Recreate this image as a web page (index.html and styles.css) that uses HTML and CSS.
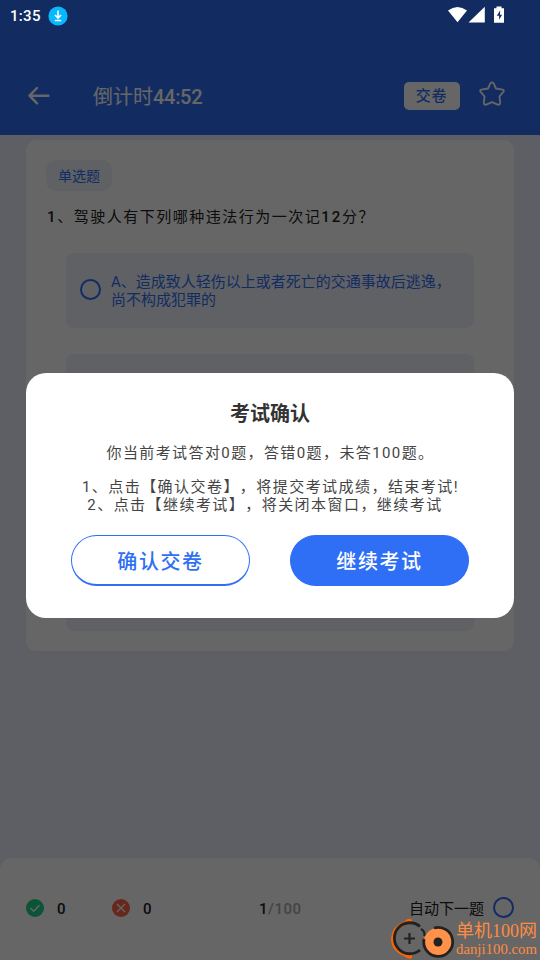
FILE: index.html
```html
<!DOCTYPE html>
<html lang="zh-CN">
<head>
<meta charset="utf-8">
<title>考试</title>
<link rel="stylesheet" href="styles.css">
</head>
<body>
<div class="screen">
  <header class="topbar">
    <svg class="back" width="24" height="20" viewBox="0 0 24 20" fill="none" stroke="#fff" stroke-width="2.400" stroke-linecap="round" stroke-linejoin="round"><path d="M10 2 2.500 9.700l7.500 7.700M2.500 9.700h19"/></svg>
    <h1 class="timer">倒计时<b>44:52</b></h1>
    <span class="submit">交卷</span>
    <svg class="star" width="26" height="26" viewBox="0 0 26 26" fill="none" stroke="#fff" stroke-width="1.8" stroke-linejoin="round"><path d="M11.500 2.200Q13 .4 14.500 2.200L17 7.500 23.500 8.600Q25.700 9.300 24.400 10.900L20.500 15.400 21.200 22Q20.800 24.200 18.800 23.600L13 21.200 7.200 23.600Q5.200 24.200 4.800 22L5.500 15.400 1.600 10.900Q.3 9.300 2.500 8.600L9 7.500Z"/></svg>
  </header>
  <main class="card">
    <span class="tag">单选题</span>
    <p class="question"><b>1</b>、驾驶人有下列哪种违法行为一次记<b>12</b>分？</p>
    <div class="option"><i class="radio"></i><span>A、造成致人轻伤以上或者死亡的交通事故后逃逸，尚不构成犯罪的</span></div>
    <div class="option"></div>
    <div class="option"></div>
    <div class="option last"></div>
  </main>
  <footer class="bottombar">
    <svg width="18" height="18" viewBox="0 0 18 18"><circle cx="9" cy="9" r="9" fill="#20d08a"/><path d="m4.500 9 3.200 3.200 5.800-6" fill="none" stroke="#fff" stroke-width="1.400"/></svg>
    <span class="count right">0</span>
    <svg width="18" height="18" viewBox="0 0 18 18"><circle cx="9" cy="9" r="9" fill="#ff6545"/><path d="m5 5 8 8m0-8-8 8" fill="none" stroke="#fff" stroke-width="1.300"/></svg>
    <span class="count wrong">0</span>
    <span class="progress">1<em>/100</em></span>
    <span class="auto">自动下一题</span>
    <i class="radio"></i>
  </footer>
</div>
<div class="overlay">
  <section class="dialog">
    <h2>考试确认</h2>
    <p class="summary">你当前考试答对0题，答错0题，未答100题。</p>
    <p class="line first">1、点击【确认交卷】，将提交考试成绩，结束考试!</p>
    <p class="line second">2、点击【继续考试】，将关闭本窗口，继续考试</p>
    <div class="actions">
      <button class="btn">确认交卷</button>
      <button class="btn primary">继续考试</button>
    </div>
  </section>
</div>
<div class="status">
  <span class="clock">1:35</span>
  <svg width="20" height="20" viewBox="0 0 20 20"><circle cx="10" cy="10" r="9.600" fill="#06b9ff"/><path d="M10 4.500v7M7 9l3 3 3-3M6.800 14.500h6.400" fill="none" stroke="#fff" stroke-width="1.600"/></svg>
  <svg class="signals" width="60" height="18" viewBox="0 0 60 18" fill="#fff"><path d="M0 3.500Q9.500-3.500 19 3.500L9.500 15.300ZM36.800-.2v15.700H20.500ZM46 1.200h2.500V-.5h5v1.700H56v14.600H46Z"/><path d="m52.300 3.300-3.500 5.500h2.300v4l3-5h-2.200Z" fill="#132c62"/></svg>
</div>
<div class="watermark">
  <svg width="66" height="44" viewBox="0 0 66 44" fill="none"><path d="M15 4Q19 0 22 3L22 6Q5 10 5 22 6 34 22 38L22 41Q19 43 14 39 1 34 1 21 2 9 15 4Z" fill="#f60"/><path d="M30 9.500A15.500 15.500 0 1 0 30 33" stroke="#222" stroke-width="2.800"/><path d="M19.500 16v11M14 21.500h11M31 12q4 2 3.500 7" stroke="#222" stroke-width="2.200"/><circle cx="48" cy="25" r="14" fill="#ff9148"/><path d="M44 11A14.500 14.500 0 1 1 34 22" stroke="#222" stroke-width="2.800"/><circle cx="48" cy="25" r="4.500" fill="#222"/></svg>
  <div class="brand"><b>单机100网</b><span>danji100.com</span></div>
</div>
</body>
</html>
```
FILE: styles.css
```css
* { box-sizing: border-box; }
body { margin: 0; width: 540px; height: 960px; overflow: hidden; position: relative; font-family: Roboto, "Noto Sans CJK SC", sans-serif; text-spacing-trim: space-all; }
h1, h2, p { margin: 0; font-weight: 400; }
.screen { height: 960px; display: flex; flex-direction: column; background: #e9edf9; }
.topbar { height: 135px; flex: none; display: flex; align-items: center; padding: 57px 35px 0 27px; background: #2f6ff5; margin-bottom: 5px; }
.timer { margin-left: 42px; padding-top: 2px; color: #fff; font-size: 20px; line-height: 30px; white-space: nowrap; }
.timer b { font-weight: 500; letter-spacing: -.3px; }
.submit { margin-left: auto; width: 56px; height: 28px; padding-right: 1px; border-radius: 5px; background: #fff; color: #2f6ff5; font-size: 15px; font-weight: 500; line-height: 29px; text-align: center; letter-spacing: .8px; }
.star { margin: -4px 0 0 19px; }
.card { height: 511px; margin: 0 26px; padding: 20px 40px 0; background: #fff; border-radius: 10px; }
.tag { display: block; width: 66px; height: 31px; margin-left: -20px; border-radius: 10px; background: #f0f2fb; color: #2f6ff5; font-size: 14px; line-height: 33px; text-align: center; }
.question { margin: 15px 0 24px -19px; height: 23px; line-height: 23px; font-size: 15px; letter-spacing: 1.500px; color: #222; white-space: nowrap; }
.question b { font-weight: 500; letter-spacing: 1.800px; }
.option { display: flex; align-items: center; height: 75px; margin-bottom: 26px; padding: 0 20px 0 14px; border-radius: 8px; background: #f0f2fb; color: #2f6ff5; font-size: 15px; line-height: 18px; }
.option span { margin-left: 10px; }
.radio { flex: none; width: 21px; height: 21px; margin-top: -1px; border: 2px solid #2f6ff5; border-radius: 50%; }
.option .radio { margin-top: -2px; }
.bottombar { height: 102px; margin-top: auto; padding: 0 26px 2px; display: flex; align-items: center; background: #fff; border-radius: 12px 12px 0 0; font-size: 15px; font-weight: 500; color: #222; }
.count { margin-left: 13px; padding-top: 2px; width: 55px; letter-spacing: 1px; }
.count.wrong { width: 116px; }
.progress { padding-top: 2px; letter-spacing: .5px; }
.progress em { font-style: normal; color: #aaa; }
.auto { margin-left: auto; margin-right: 9px; font-weight: 400; padding-bottom: 1px; }
.overlay { position: absolute; inset: 0; padding: 373px 26px 0; background: rgba(0, 0, 0, .6); }
.dialog { height: 245px; border-radius: 20px; background: #fff; text-align: center; color: #444; font-size: 15px; white-space: nowrap; }
.dialog h2 { padding-top: 26px; font-size: 20px; font-weight: 700; line-height: 30px; color: #333; }
.summary { margin-top: 14px; height: 20px; padding-left: 1px; line-height: 20px; letter-spacing: 1.400px; }
.line { line-height: 18px; letter-spacing: 1.450px; }
.line.first { margin-top: 15px; padding-left: 1px; }
.line.second { padding-right: 10px; }
.actions { display: flex; justify-content: center; gap: 40px; margin-top: 21px; }
.btn { width: 179px; height: 51px; padding: 1px 0 0; border: 1.500px solid #2f6ff5; border-bottom-width: 2px; border-radius: 26px; background: #fff; color: #2f6ff5; font: 500 20px/48px "Noto Sans CJK SC", sans-serif; letter-spacing: 1.600px; }
.btn.primary { background: #2f6ff5; color: #fff; }
.status { position: absolute; top: 0; left: 0; width: 540px; height: 31px; padding: 0 34px 0 10px; display: flex; align-items: center; color: #fff; }
.clock { font-size: 15px; font-weight: 500; letter-spacing: .3px; margin-right: 7px; }
.signals { margin-left: auto; margin-right: -2px; overflow: visible; }
.watermark { position: absolute; left: 390px; top: 917px; display: flex; color: #ff8b42; font-family: "Liberation Serif", "Noto Sans CJK SC", serif; white-space: nowrap; }
.brand { display: flex; flex-direction: column; }
.brand b { font-size: 18px; line-height: 28px; font-weight: 400; }
.brand span { font-size: 14.800px; line-height: 9px; }
```
